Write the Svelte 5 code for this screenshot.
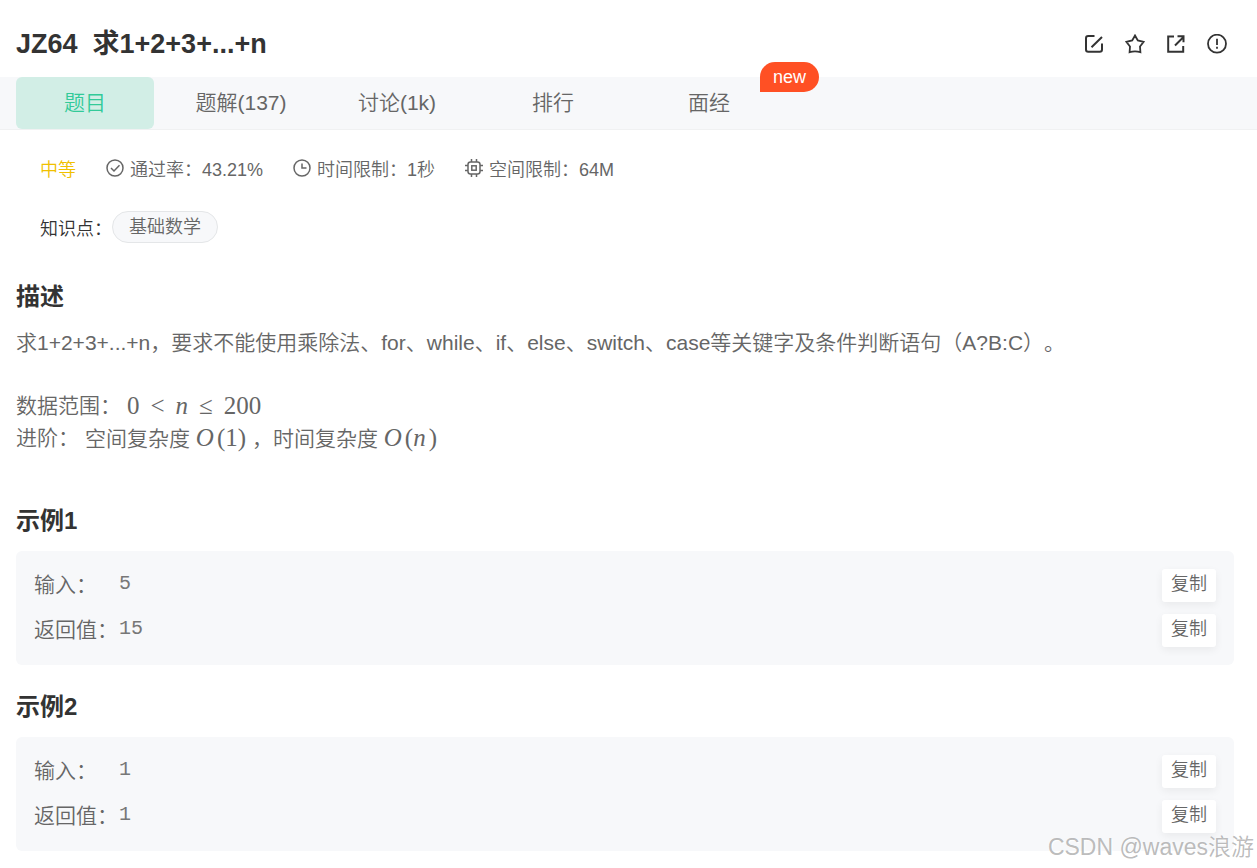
<script>
  // Problem page — title bar, tabs, limits, statement and sample cases.
  const tabs = [
    { id: "question", label: "题目" },
    { id: "solution", label: "题解(137)" },
    { id: "discuss", label: "讨论(1k)" },
    { id: "rank", label: "排行" },
    { id: "interview", label: "面经", badge: "new" },
  ];

  const samples = [
    { title: "示例1", rows: [["输入：", "5"], ["返回值：", "15"]] },
    { title: "示例2", rows: [["输入：", "1"], ["返回值：", "1"]] },
  ];

  let active = $state("question");

  function copy(text) {
    navigator.clipboard?.writeText(text);
  }
</script>

<div class="page" lang="zh-CN">
  <header class="head">
    <h1><span>JZ64</span><span>求1+2+3+...+n</span></h1>
    <div class="actions">
      <button aria-label="笔记">
        <svg viewBox="0 0 20 20" class="ico">
          <path d="M10.500 2H4.200Q2 2 2 4.200v11.300Q2 17.700 4.200 17.700h11.600q2.200 0 2.200-2.200V9.500M7.500 13.200 18 3" />
        </svg>
      </button>
      <button aria-label="收藏">
        <svg viewBox="0 0 20 20" class="ico star">
          <path d="M10 1.500 12.800 6.500 18.700 7.800 15 12.500 15.400 18.200Q10 16.400 4.600 18.200L5 12.500 1.300 7.800 7.200 6.500z" />
        </svg>
      </button>
      <button aria-label="分享">
        <svg viewBox="0 0 20 20" class="ico">
          <path d="M8 2.500H2.200v15.200h15v-5.700M9 11.500l8.500-8.500M11.500 2.200h6v6" />
        </svg>
      </button>
      <button aria-label="反馈">
        <svg viewBox="0 0 20 20" class="ico star">
          <circle cx="10" cy="9.700" r="9" />
          <path d="M10 4.800v6.200M10 12.700v2" />
        </svg>
      </button>
    </div>
  </header>

  <nav class="tabs">
    {#each tabs as tab}
      <button class="tab" class:active={active === tab.id} onclick={() => (active = tab.id)}>
        {tab.label}
        {#if tab.badge}<span class="badge">{tab.badge}</span>{/if}
      </button>
    {/each}
  </nav>

  <main>
    <div class="meta">
      <span class="level">中等</span>
      <span class="item">
        <svg viewBox="0 0 18 18" class="small">
          <circle cx="9" cy="9" r="8" />
          <path d="m5 9 3 3 5.500-5.800" />
        </svg>
        <span>通过率：43.21%</span>
      </span>
      <span class="item">
        <svg viewBox="0 0 18 18" class="small">
          <circle cx="9" cy="9" r="8" />
          <path d="M9 4.500V9h4.500" />
        </svg>
        <span>时间限制：1秒</span>
      </span>
      <span class="item">
        <svg viewBox="0 0 18 18" class="small">
          <rect x="3" y="3" width="12" height="12" rx="2.500" />
          <rect x="6.800" y="6.800" width="4.400" height="4.400" />
          <path d="M6.500 0v3M11.500 0v3M6.500 15v3M11.500 15v3M0 6.500h3M0 11.500h3M15 6.500h3M15 11.500h3" />
        </svg>
        <span>空间限制：64M</span>
      </span>
    </div>

    <div class="topics">
      <span class="name">知识点：</span>
      <a class="tag" href="#math">基础数学</a>
    </div>

    <section class="desc">
      <h2>描述</h2>
      <p>求1+2+3+...+n，要求不能使用乘除法、for、while、if、else、switch、case等关键字及条件判断语句（A?B:C）。</p>
      <div class="line">
        <span>数据范围：</span>
        <span class="math range"><span>0</span><span>&lt;</span><i>n</i><span>≤</span><span>200</span></span>
      </div>
      <div class="line">
        <span>进阶：</span>
        <span class="cost">空间复杂度 <span class="math"><i>O</i>(1)</span> ，时间复杂度 <span class="math"><i>O</i>(<i>n</i>)</span></span>
      </div>
    </section>

    {#each samples as sample}
      <section class="sample">
        <h2>{sample.title}</h2>
        <div class="box">
          {#each sample.rows as [label, value]}
            <div class="row">
              <span class="label">{label}</span>
              <code>{value}</code>
              <button class="copy" onclick={() => copy(value)}>复制</button>
            </div>
          {/each}
        </div>
      </section>
    {/each}
  </main>

  <div class="watermark">CSDN @waves浪游</div>
</div>

<style>
  :global(body) {
    margin: 0;
    background: #fff;
  }
  .page {
    position: relative;
    box-sizing: border-box;
    min-height: 100vh;
    padding-bottom: 17px;
    font-family: "Liberation Sans", "Noto Sans CJK SC", sans-serif;
    font-size: 21px;
    font-weight: 350;
    line-height: 32px;
    text-spacing-trim: space-all;
    color: #666;
  }
  button {
    padding: 0;
    border: 0;
    background: none;
    font: inherit;
    color: inherit;
    cursor: pointer;
  }
  .head {
    display: flex;
    align-items: center;
    justify-content: space-between;
    padding: 24px 30px 13px 16px;
    color: #333;
  }
  h1 {
    display: flex;
    gap: 15px;
    margin: 0;
    font-size: 27px;
    line-height: 40px;
    font-weight: 700;
  }
  .actions {
    display: flex;
    gap: 21px;
  }
  .actions button {
    display: flex;
  }
  .ico,
  .small {
    fill: none;
    stroke: currentColor;
    stroke-width: 2;
  }
  .ico {
    width: 20px;
    height: 20px;
  }
  .star {
    stroke-width: 1.8;
  }
  .small {
    width: 18px;
    height: 18px;
    stroke-width: 1.5;
  }
  .tabs {
    display: flex;
    gap: 18px;
    padding: 0 16px;
    background: #f7f8fa;
    border-bottom: 1px solid #f0f1f2;
  }
  .tab {
    position: relative;
    width: 138px;
    height: 52px;
    border-radius: 6px;
  }
  .tab.active {
    background: #d2eee6;
    color: #32ca99;
  }
  .badge {
    position: absolute;
    top: -15px;
    left: 120px;
    width: 59px;
    border-radius: 15px 15px 15px 0;
    background: #ff5024;
    color: #fff;
    font-size: 18px;
    line-height: 30px;
  }
  main {
    padding: 27px 23px 0 16px;
  }
  .meta {
    display: flex;
    gap: 30px;
    padding-left: 24px;
    font-size: 18px;
    line-height: 26px;
  }
  .level {
    color: #f0c000;
  }
  .item {
    display: flex;
    gap: 6px;
  }
  .small {
    margin-top: 2px;
  }
  .topics {
    display: flex;
    align-items: flex-end;
    margin-top: 28px;
    padding-left: 24px;
    font-size: 18px;
    color: #333;
  }
  .name {
    line-height: 28px;
  }
  .tag {
    padding: 0 16px;
    border: 1px solid #e4e6e8;
    border-radius: 16px;
    background: #f7f8fa;
    line-height: 30px;
    color: #666;
    text-decoration: none;
  }
  h2 {
    margin: 0 0 12px;
    font-size: 24px;
    line-height: 36px;
    font-weight: 700;
    color: #333;
  }
  .desc {
    margin: 36px 0 49px;
  }
  .desc p {
    margin: 0 0 31px;
  }
  .line {
    display: flex;
    gap: 6px;
    height: 32px;
  }
  .math {
    font-family: "Liberation Serif", serif;
    font-size: 25px;
  }
  .range {
    display: flex;
    gap: 11px;
  }
  .cost i {
    margin-right: 3px;
  }
  .sample {
    margin-bottom: 24px;
  }
  .sample:last-child {
    margin-bottom: 0;
  }
  .box {
    display: flex;
    flex-direction: column;
    gap: 12px;
    padding: 18px;
    border-radius: 6px;
    background: #f7f8fa;
  }
  .row {
    display: flex;
    height: 33px;
  }
  .label {
    width: 85px;
  }
  code {
    flex: 1;
    font-family: "Liberation Mono", monospace;
    font-size: 20px;
    line-height: 30px;
    color: #777;
  }
  .copy {
    display: flex;
    justify-content: center;
    width: 54px;
    border-radius: 3px;
    background: #fff;
    box-shadow: 0 3px 8px rgba(0, 0, 0, 0.06);
    font-size: 18px;
    line-height: 30px;
  }
  .watermark {
    position: absolute;
    right: 3px;
    bottom: 5px;
    font-size: 23px;
    color: rgba(150, 150, 150, 0.65);
    text-shadow: 1px 1px 1px #fff;
    pointer-events: none;
  }
</style>
